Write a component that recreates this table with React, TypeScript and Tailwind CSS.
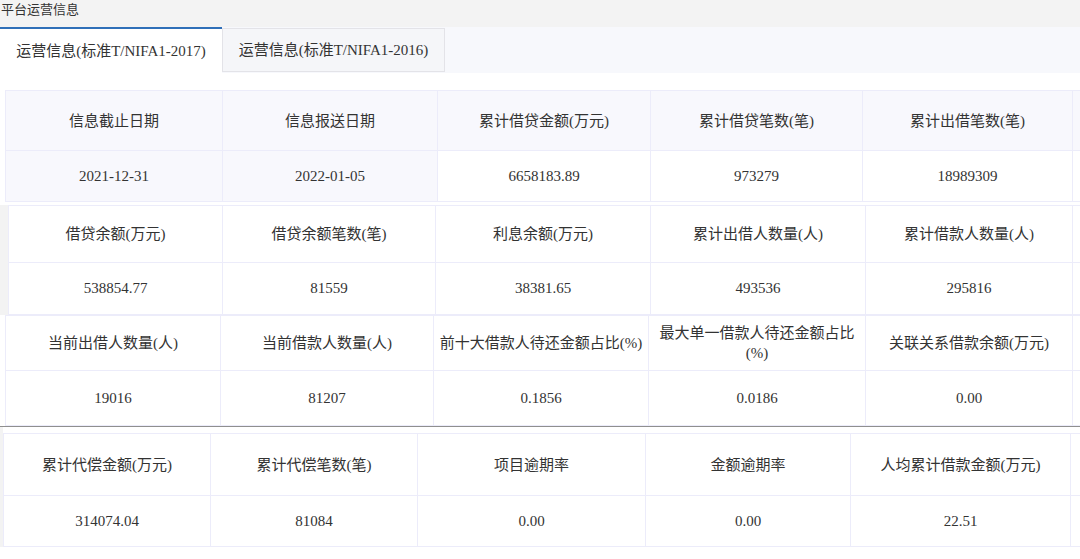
const font = { fontFamily: '"Liberation Serif", "Noto Sans CJK SC", serif' };

type Cell = { label: string; value: string };

function Block({
    cells,
    widths,
    headH,
    dataH,
    lead,
    leadGray,
    shadeData,
    shadeHead,
}: {
    cells: Cell[];
    widths: number[];
    headH: number;
    dataH: number;
    lead: number;
    leadGray?: boolean;
    shadeData?: number;
    shadeHead?: boolean;
}) {
    const all = [...cells, { label: "", value: "" }];
    return (
        <div className="flex w-[1080px] overflow-hidden">
            <div className={`shrink-0 ${leadGray ? "bg-[#f3f3f3]" : ""}`} style={{ width: lead }} />
            <div className="flex shrink-0 border-l border-t border-[#ececfa]">
                {all.map((c, i) => (
                    <div key={i} className="flex shrink-0 flex-col border-r border-[#ececfa]" style={{ width: widths[i] }}>
                        <div
                            className={`flex items-center justify-center border-b border-[#ececfa] text-center text-[15px] leading-[20px] text-[#333] ${
                                shadeHead ? "bg-[#f8f8fd]" : ""
                            }`}
                            style={{ height: headH }}
                        >
                            {c.label}
                        </div>
                        <div
                            className={`flex items-center justify-center border-b border-[#ececfa] text-[15px] text-[#333] ${
                                shadeData !== undefined && i < shadeData ? "bg-[#f8f8fd]" : ""
                            }`}
                            style={{ height: dataH }}
                        >
                            {c.value}
                        </div>
                    </div>
                ))}
            </div>
        </div>
    );
}

export default function App() {
    return (
        <div className="h-[559px] w-[1080px] overflow-hidden bg-white" style={font}>
            <div className="h-[27px] bg-[#f3f3f3] pl-[1px] pt-[1px] text-[13px] leading-[18px] text-[#333]">平台运营信息</div>
            <div className="flex h-[46px] bg-[#f7f8fc]">
                <div className="flex w-[222px] items-center justify-center border-t-2 border-[#2f6fb8] bg-white text-[15px] text-[#333]">
                    运营信息(标准T/NIFA1-2017)
                </div>
                <div className="mt-[1px] flex h-[44px] w-[223px] items-center justify-center border border-[#e3e3e8] bg-[#f5f6f9] text-[15px] text-[#333]">
                    运营信息(标准T/NIFA1-2016)
                </div>
            </div>
            <div className="h-[17px]" />
            <Block
                lead={5}
                widths={[217, 215, 213, 212, 210, 20]}
                headH={60}
                dataH={51}
                shadeHead
                shadeData={2}
                cells={[
                    { label: "信息截止日期", value: "2021-12-31" },
                    { label: "信息报送日期", value: "2022-01-05" },
                    { label: "累计借贷金额(万元)", value: "6658183.89" },
                    { label: "累计借贷笔数(笔)", value: "973279" },
                    { label: "累计出借笔数(笔)", value: "18989309" },
                ]}
            />
            <div className="h-[3px]" />
            <Block
                lead={8}
                leadGray
                widths={[214, 213, 215, 215, 207, 20]}
                headH={57}
                dataH={52}
                cells={[
                    { label: "借贷余额(万元)", value: "538854.77" },
                    { label: "借贷余额笔数(笔)", value: "81559" },
                    { label: "利息余额(万元)", value: "38381.65" },
                    { label: "累计出借人数量(人)", value: "493536" },
                    { label: "累计借款人数量(人)", value: "295816" },
                ]}
            />
            <Block
                lead={5}
                widths={[215, 213, 215, 217, 207, 20]}
                headH={55}
                dataH={55}
                cells={[
                    { label: "当前出借人数量(人)", value: "19016" },
                    { label: "当前借款人数量(人)", value: "81207" },
                    { label: "前十大借款人待还金额占比(%)", value: "0.1856" },
                    { label: "最大单一借款人待还金额占比(%)", value: "0.0186" },
                    { label: "关联关系借款余额(万元)", value: "0.00" },
                ]}
            />
            <div className="h-[1px] bg-[#8f8f8f]" />
            <div className="flex">
                <div className="w-[3px] shrink-0 bg-[#f3f3f3]" />
                <div className="flex-1 overflow-hidden pt-[6px]">
                    <Block
                        lead={0}
                        widths={[207, 207, 228, 205, 220, 20]}
                        headH={62}
                        dataH={51}
                        cells={[
                            { label: "累计代偿金额(万元)", value: "314074.04" },
                            { label: "累计代偿笔数(笔)", value: "81084" },
                            { label: "项目逾期率", value: "0.00" },
                            { label: "金额逾期率", value: "0.00" },
                            { label: "人均累计借款金额(万元)", value: "22.51" },
                        ]}
                    />
                </div>
            </div>
        </div>
    );
}
